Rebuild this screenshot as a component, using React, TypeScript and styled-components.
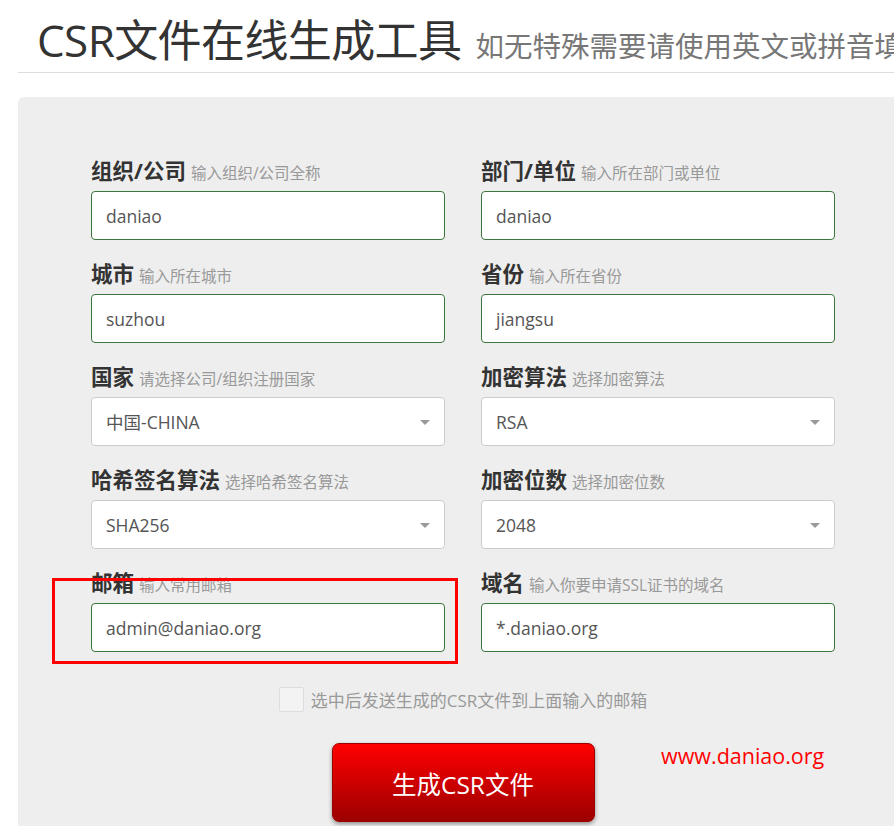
import React from "react";
import styled, { createGlobalStyle } from "styled-components";

const Global = createGlobalStyle`
  html, body { margin: 0; padding: 0; background: #fff; overflow: hidden; }
  body { font-family: "Open Sans", "Noto Sans CJK SC", sans-serif; width: 894px; height: 826px; }
`;

const Page = styled.div`
  position: relative;
  width: 894px;
  height: 826px;
  overflow: hidden;
  padding-left: 18px;
  box-sizing: border-box;
`;

const Header = styled.div`
  display: flex;
  align-items: baseline;
  white-space: nowrap;
  padding: 13px 0 0 19px;
  height: 73px;
  box-sizing: border-box;
  border-bottom: 1px solid #ddd;
`;

const Title = styled.h1`
  margin: 0;
  font-size: 44px;
  font-weight: 400;
  color: #333;
  line-height: 54px;
  letter-spacing: -0.6px;
`;

const Subtitle = styled.span`
  margin-left: 14px;
  font-size: 28.5px;
  color: #777;
`;

const Panel = styled.div`
  margin-top: 24px;
  width: 900px;
  min-height: 760px;
  background: #eee;
  border-radius: 6px;
  padding: 58px 0 0 73px;
  box-sizing: border-box;
`;

const Form = styled.div`
  width: 744px;
  display: grid;
  grid-template-columns: 354px 354px;
  column-gap: 36px;
  row-gap: 18px;
`;

const Field = styled.div`
  display: flex;
  flex-direction: column;
  gap: 5px;
`;

const LabelRow = styled.div`
  display: flex;
  align-items: baseline;
  height: 31px;
  white-space: nowrap;
`;

const Label = styled.span`
  font-size: 21.5px;
  font-weight: 700;
  color: #333;
  line-height: 31px;
`;

const Hint = styled.span`
  margin-left: 5px;
  font-size: 15.5px;
  color: #999;
`;

const Box = styled.div<{ $select?: boolean }>`
  position: relative;
  height: 49px;
  box-sizing: border-box;
  border: 1px solid ${(p) => (p.$select ? "#ccc" : "#3c763d")};
  border-radius: 4px;
  background: #fff;
  display: flex;
  align-items: center;
  padding-left: 14px;
  font-size: 17.5px;
  color: #555;
`;

const Caret = styled.span`
  position: absolute;
  right: 14px;
  top: 22px;
  width: 0;
  height: 0;
  border-left: 5px solid transparent;
  border-right: 5px solid transparent;
  border-top: 5px solid #999;
`;

const CheckRow = styled.label`
  width: 744px;
  display: flex;
  justify-content: center;
  align-items: center;
  gap: 7px;
  margin-top: 35px;
  font-size: 17px;
  color: #999;
`;

const CheckBox = styled.span`
  width: 23px;
  height: 23px;
  border: 1px solid #ddd;
  border-radius: 2px;
  background: #f3f3f3;
`;

const ButtonRow = styled.div`
  width: 744px;
  display: flex;
  justify-content: center;
  margin-top: 31px;
`;

const Button = styled.button`
  width: 263px;
  height: 79px;
  border: 1px solid #900;
  border-radius: 7px;
  background: linear-gradient(#ff0000, #9c0000);
  color: #fff;
  font-family: "Open Sans", "Noto Sans CJK SC", sans-serif;
  font-size: 24.5px;
  box-shadow: 0 2px 4px rgba(0, 0, 0, 0.4);
  padding-top: 2px;
`;

const Watermark = styled.div`
  position: absolute;
  left: 661px;
  top: 741px;
  font-size: 21.5px;
  color: #f00;
`;

const Annotation = styled.div`
  position: absolute;
  left: 52px;
  top: 578px;
  width: 406px;
  height: 86px;
  box-sizing: border-box;
  border: 3px solid #f00;
`;

type F = { label: string; hint: string; value: string; select?: boolean };

const fields: F[] = [
  { label: "组织/公司", hint: "输入组织/公司全称", value: "daniao" },
  { label: "部门/单位", hint: "输入所在部门或单位", value: "daniao" },
  { label: "城市", hint: "输入所在城市", value: "suzhou" },
  { label: "省份", hint: "输入所在省份", value: "jiangsu" },
  { label: "国家", hint: "请选择公司/组织注册国家", value: "中国-CHINA", select: true },
  { label: "加密算法", hint: "选择加密算法", value: "RSA", select: true },
  { label: "哈希签名算法", hint: "选择哈希签名算法", value: "SHA256", select: true },
  { label: "加密位数", hint: "选择加密位数", value: "2048", select: true },
  { label: "邮箱", hint: "输入常用邮箱", value: "admin@daniao.org" },
  { label: "域名", hint: "输入你要申请SSL证书的域名", value: "*.daniao.org" },
];

export default function App() {
  return (
    <>
      <Global />
      <Page>
        <Header>
          <Title>CSR文件在线生成工具</Title>
          <Subtitle>如无特殊需要请使用英文或拼音填写</Subtitle>
        </Header>
        <Panel>
          <Form>
            {fields.map((f) => (
              <Field key={f.label}>
                <LabelRow>
                  <Label>{f.label}</Label>
                  <Hint>{f.hint}</Hint>
                </LabelRow>
                <Box $select={f.select}>
                  {f.value}
                  {f.select && <Caret />}
                </Box>
              </Field>
            ))}
          </Form>
          <CheckRow>
            <CheckBox />
            选中后发送生成的CSR文件到上面输入的邮箱
          </CheckRow>
          <ButtonRow>
            <Button>生成CSR文件</Button>
          </ButtonRow>
        </Panel>
        <Watermark>www.daniao.org</Watermark>
        <Annotation />
      </Page>
    </>
  );
}
